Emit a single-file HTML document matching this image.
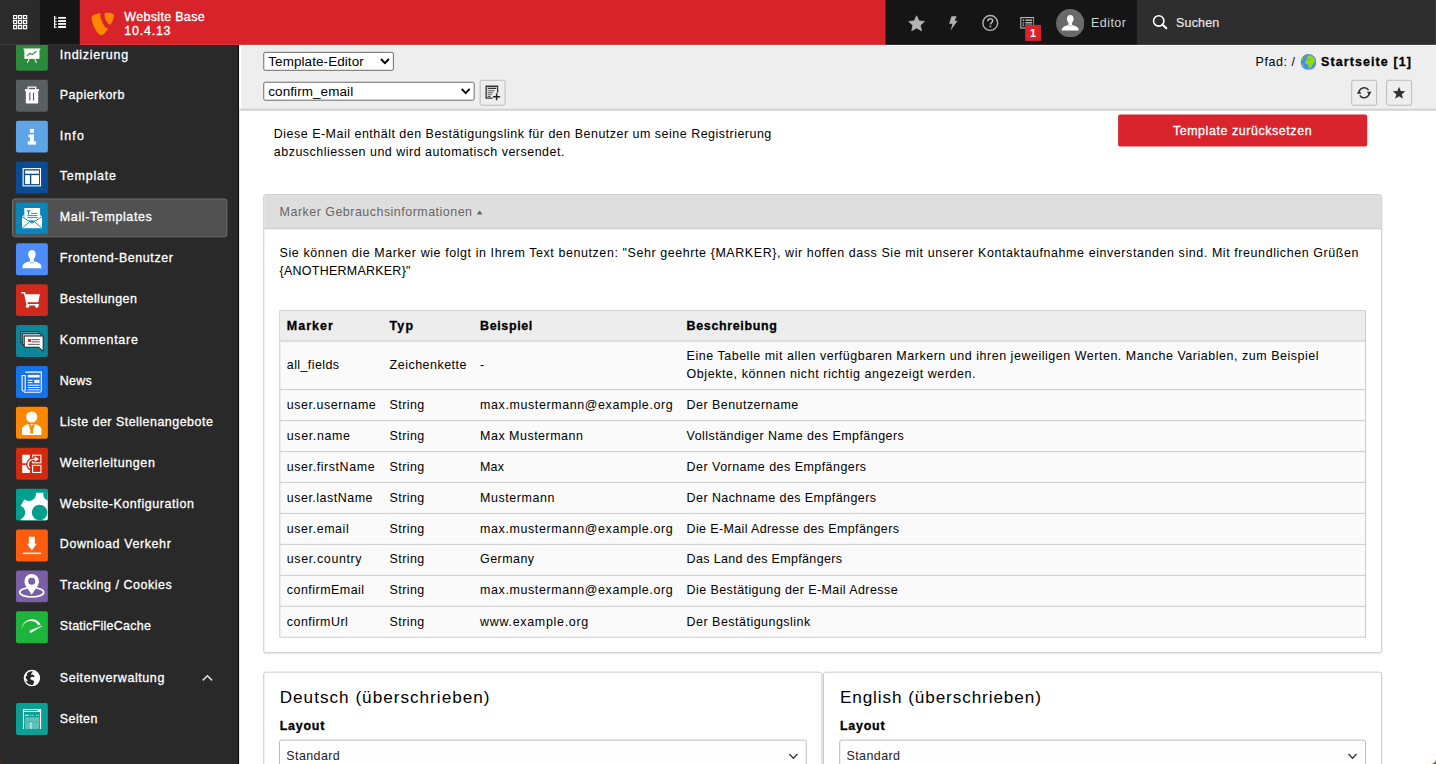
<!DOCTYPE html>
<html lang="de">
<head>
<meta charset="utf-8">
<title>TYPO3 Backend</title>
<style>
*{box-sizing:border-box;margin:0;padding:0}
html,body{width:1436px;height:764px;overflow:hidden;background:#fff}
body{font-family:"Liberation Sans",sans-serif;font-size:12.5px;color:#000;position:relative}
#root{position:absolute;left:0;top:0;width:1440px;height:767px;transform:scale(.9972);transform-origin:0 0;overflow:hidden;background:#fff}
span{white-space:nowrap}
svg{display:block}
/* ---------- top bar ---------- */
#topbar{position:absolute;left:0;top:0;width:1440px;height:45px;z-index:5}
#tbred{position:absolute;left:79px;top:0;width:810px;height:45px;background:#d8232a}
#tb1{position:absolute;left:0;top:0;width:40.6px;height:45px;background:#2b2b2b}
#tb2{position:absolute;left:40px;top:0;width:40px;height:45px;background:#151515}
#tbtools{position:absolute;left:888px;top:0;width:252.6px;height:45px;background:#151515}
#tbsearch{position:absolute;left:1140px;top:0;width:300px;height:45px;background:#2e2e2e}
#sitename{position:absolute;left:124.7px;top:11px;color:#fff;font-size:12.5px;line-height:13.6px;white-space:nowrap;-webkit-text-stroke:.35px #fff}
#tbuser{position:absolute;left:205.5px;top:14.9px;color:#d2d2d2;font-size:12.5px;line-height:16px}
#tbsearchtxt{position:absolute;left:39.5px;top:14.9px;color:#e8e8e8;font-size:12.5px;line-height:16px;-webkit-text-stroke:.2px #e8e8e8}
#topbar svg{position:absolute}
/* ---------- sidebar ---------- */
#sidebar{position:absolute;left:0;top:45px;width:240px;height:722px;background:#292929;overflow:hidden}
.mi{position:absolute;left:12px;width:216px;height:39px}
.mi .ic{position:absolute;left:4px;top:4px;width:32px;height:32px;border-radius:2px;overflow:hidden}
.mi .lb{position:absolute;left:48px;top:11.5px;color:#fff;font-size:12.5px;line-height:16px;white-space:nowrap;-webkit-text-stroke:.3px #fff}
.mi.act{background:#515151;border:1px solid #6e6e6e;border-radius:3px}
.mi.act .ic{left:3px;top:3px}
.mi.act .lb{left:47px;top:10.5px}
/* ---------- docheader ---------- */
#doc{position:absolute;left:240px;top:45px;width:1200px;height:66px;background:#eee;border-bottom:2px solid #d2d2d2;z-index:2}
#doc:before{content:'';position:absolute;left:0;top:0;width:2px;height:100%;background:#fff}
#doc:after{content:'';position:absolute;left:0;top:0;width:100%;height:1px;background:#fbffff}
#sbedge{position:absolute;left:239px;top:45px;width:1px;height:722px;background:#0c0c0c;z-index:3;transform:translateX(-.45px)}
.sel{position:absolute;background:#fff;border:1px solid #6b6b6b;border-radius:2px;height:19px;font-size:13.5px;line-height:17px;padding-left:4px;white-space:nowrap}
.sel svg{position:absolute;right:3px;top:5px}
.dbtn{position:absolute;width:26px;height:26px;background:#eee;border:1px solid #bbb;border-radius:2px}
.dbtn svg{position:absolute;left:4px;top:4px}
#path{position:absolute;top:8px;left:1019px;font-size:12.5px;line-height:16px;white-space:nowrap}
/* ---------- content ---------- */
#content{position:absolute;left:240px;top:110px;width:1200px;height:657px;background:#fff;overflow:hidden}
.t{position:absolute;white-space:nowrap;line-height:18px;font-size:12.5px}
.panel{position:absolute;border:1px solid #ccc;background:#fff;border-radius:2px;box-shadow:0 1px 1px rgba(0,0,0,.1)}
.ph{position:absolute;left:0;top:0;right:0;height:33px;background:#dedede;border-bottom:1px solid #ccc;color:#666}
#tbl{position:absolute;left:15px;top:115px;width:1090px;border:1px solid #ccc;background:#fafafa}
.tr{position:relative;height:31px;border-top:1px solid #ccc}
.tr.h{height:31px;background:#ededed;border-top:0;border-bottom:1px solid #ccc;font-weight:bold}
.tr.h+.tr{border-top:0}
.tr.tall{height:49px}
.tr .c{position:absolute;top:6px;line-height:18px;font-size:12.5px;white-space:nowrap}
.c1{left:7px}.c2{left:110px}.c3{left:201px}.c4{left:408px}
.h2{position:absolute;font-size:19px;line-height:22px;white-space:nowrap}
.lbl{position:absolute;font-weight:bold;font-size:12.5px;line-height:16px}
.fsel{position:absolute;height:32px;border:1px solid #bbb;border-radius:2px;background:#fefefe;padding:8px 0 0 7px;font-size:12.5px;line-height:16px;box-shadow:0 1px 1px rgba(0,0,0,.06)}
.fsel svg{position:absolute;right:9px;top:10px}
b,.b{font-weight:bold;-webkit-text-stroke:.3px currentColor}
</style>
</head>
<body>

<div id="root">
<div id="sidebar">
<div class="mi" style="top:-10.0px"><div class="ic" style="background:#2a8b3c"><svg width="32" height="32" viewBox="0 0 32 32"><rect x="7.6" y="9.6" width="16.8" height="1.6" fill="#fff"/><rect x="8.4" y="10.6" width="15.2" height="9.4" fill="#fff"/>
<path d="M13.2 20 L11.6 23.6 M18.8 20 L20.4 23.6" stroke="#fff" stroke-width="1.1" stroke-linecap="round" opacity=".9"/>
<path d="M11.2 17.2 L14 14.4 L16.2 15.8 L20.6 12.4" stroke="#2a8b3c" stroke-width="1.1" fill="none"/></svg></div><div class="lb"><span style="letter-spacing:0.734px">Indizierung</span></div></div>
<div class="mi" style="top:30.97px"><div class="ic" style="background:#595f61"><svg width="32" height="32" viewBox="0 0 32 32"><path d="M12.3 9.6 V7.4 H19.8 V9.6" fill="none" stroke="#fff" stroke-width="1.3"/><rect x="9" y="9.4" width="14.2" height="2" fill="#fff"/>
<rect x="9.9" y="11.3" width="12.4" height="12.6" rx=".8" fill="#fff"/>
<rect x="13.3" y="12.8" width="1.2" height="8" fill="#595f61"/><rect x="17" y="12.8" width="1.2" height="8" fill="#595f61"/></svg></div><div class="lb"><span style="letter-spacing:0.47px">Papierkorb</span></div></div>
<div class="mi" style="top:71.93px"><div class="ic" style="background:#5ea5e8"><svg width="32" height="32" viewBox="0 0 32 32"><rect x="14" y="8.2" width="4.1" height="3.9" fill="#fff"/><rect x="12.4" y="14" width="5.7" height="2.6" fill="#fff"/>
<rect x="14.2" y="14" width="3.9" height="8" fill="#fff"/><rect x="11.9" y="20.7" width="8.3" height="3.3" fill="#fff"/></svg></div><div class="lb"><span style="letter-spacing:1.069px">Info</span></div></div>
<div class="mi" style="top:112.9px"><div class="ic" style="background:#0a4c94"><svg width="32" height="32" viewBox="0 0 32 32"><rect x="7.2" y="7.1" width="17.4" height="17.3" fill="none" stroke="#fff" stroke-width="1.1"/>
<rect x="9.2" y="9" width="13.9" height="3.2" fill="#fff"/><rect x="9.2" y="13.6" width="4.8" height="9" fill="#fff"/><rect x="15.4" y="13.6" width="7.7" height="9" fill="#fff"/></svg></div><div class="lb"><span style="letter-spacing:0.775px">Template</span></div></div>
<div class="mi act" style="top:153.86px"><div class="ic" style="background:#0a86bb"><svg width="32" height="32" viewBox="0 0 32 32"><path d="M8.4 5.6 H24.2 V18 H8.4 Z" fill="#fff"/>
<path d="M6.1 14 L8.4 12.4 V16 Z M26.1 14 L23.9 12.4 V16Z" fill="#fff"/>
<path d="M6.1 14.2 L16.1 20.6 L26.1 14.2 V25.8 H6.1 Z" fill="#fff"/>
<path d="M6.4 25.6 L13.6 19.4 M25.8 25.6 L18.6 19.4" stroke="#0a86bb" stroke-width=".9" fill="none"/>
<path d="M6.1 14.2 L16.1 20.8 L26.1 14.2" stroke="#0a86bb" stroke-width=".9" fill="none"/>
<path d="M10.6 8.4 H14.6 M12.6 8.4 V12" stroke="#0a86bb" stroke-width="1.1" fill="none"/>
<path d="M15 11 H21.6 M11.4 13.2 H21.6 M11.4 15.2 H21.6" stroke="#0a86bb" stroke-width=".9" fill="none"/></svg></div><div class="lb"><span style="letter-spacing:0.63px">Mail-Templates</span></div></div>
<div class="mi" style="top:194.83px"><div class="ic" style="background:#4c8dfb"><svg width="32" height="32" viewBox="0 0 32 32"><path d="M16 6.8 c-2.4 0 -3.7 1.7 -3.7 4.2 c0 1.6 .5 3 1.4 4 c.3 .4 .4 .9 .4 1.6 v1.2 c-2.4 1 -6 1.6 -7.2 4 c-.3 .6 -.4 1.8 -.4 3.300 h19 c0 -1.500 -.1 -2.700 -.4 -3.300 c-1.200 -2.400 -4.800 -3 -7.200 -4 v-1.200 c0 -.7 .1 -1.200 .4 -1.600 c.9 -1 1.400 -2.400 1.400 -4 c0 -2.500 -1.300 -4.200 -3.700 -4.200z" fill="#fff"/>
<path d="M13.600 18.400 c.700 .900 1.500 1.300 2.400 1.300 s1.700 -.4 2.400 -1.300" stroke="#4c8dfb" stroke-width=".7" fill="none"/></svg></div><div class="lb"><span style="letter-spacing:0.568px">Frontend-Benutzer</span></div></div>
<div class="mi" style="top:235.79px"><div class="ic" style="background:#cf2a1c"><svg width="32" height="32" viewBox="0 0 32 32"><path d="M5.800 8.500 H8.600 L11.300 20.600 H22.600" stroke="#fff" stroke-width="1.500" fill="none" stroke-linecap="round" stroke-linejoin="round"/>
<path d="M9 10 H24 L22.400 18.200 H10.800 Z" fill="#fff"/>
<circle cx="11.600" cy="22" r="1.700" fill="#fff"/><circle cx="20.900" cy="22" r="1.700" fill="#fff"/></svg></div><div class="lb"><span style="letter-spacing:0.449px">Bestellungen</span></div></div>
<div class="mi" style="top:276.75px"><div class="ic" style="background:#0e8598"><svg width="32" height="32" viewBox="0 0 32 32"><rect x="4.900" y="6.600" width="18.200" height="11" fill="#5c9fad" stroke="#1a2c30" stroke-width=".8"/>
<rect x="6.600" y="8.600" width="18.400" height="11" fill="#9ccbd3" stroke="#1a2c30" stroke-width=".8"/>
<path d="M8.300 11 H27.300 V26.200 L23 22.200 H8.300 Z" fill="#fff" stroke="#111" stroke-width=".9"/>
<rect x="12.100" y="14" width="3" height="2.900" fill="#e02a2a"/>
<path d="M15.800 14.600 H23.900 M15.800 16.800 H23.900 M12 19.300 H23.900" stroke="#555" stroke-width="1"/></svg></div><div class="lb"><span style="letter-spacing:0.74px">Kommentare</span></div></div>
<div class="mi" style="top:317.72px"><div class="ic" style="background:#1572ee"><svg width="32" height="32" viewBox="0 0 32 32"><path d="M9.300 6.200 H25.400 V24.500 a1.900 1.900 0 0 1 -1.900 1.900 H8.200" fill="none" stroke="#fff" stroke-width="1.100"/>
<path d="M9.300 9.600 H6.200 V24.400 a1.800 1.800 0 0 0 3.100 0 Z" fill="none" stroke="#fff" stroke-width="1.100"/>
<rect x="11.900" y="8.900" width="11.800" height="2.600" fill="#fff"/>
<path d="M11.900 14.400 H16.600 M11.900 16.700 H16.600 M11.900 19.300 H23.700 M11.900 21.600 H23.700 M11.900 23.900 H23.700" stroke="#fff" stroke-width="1"/>
<rect x="18.300" y="13.900" width="5.400" height="3.300" fill="#fff" opacity=".9"/></svg></div><div class="lb"><span style="letter-spacing:0.275px">News</span></div></div>
<div class="mi" style="top:358.69px"><div class="ic" style="background:#ff8700"><svg width="32" height="32" viewBox="0 0 32 32"><circle cx="15.800" cy="10.200" r="5.600" fill="#fff"/>
<path d="M6 27.400 v-4.400 c0 -3.200 2.600 -4.800 6 -5.600 h7.600 c3.400 .800 6 2.400 6 5.600 v4.400 a.8 .8 0 0 1 -.8 .8 h-18 a.8 .8 0 0 1 -.8 -.8z" fill="#fff"/>
<path d="M12.600 17.400 l2 6.600 l1.200 -3.600 l1.200 3.600 l2 -6.600 l-1.800 0 l-1.400 2 l-1.400 -2z" fill="#ff8700"/>
<path d="M15 20.400 h1.600 l.7 6.400 h-3z" fill="#ff8700"/></svg></div><div class="lb"><span style="letter-spacing:0.485px">Liste der Stellenangebote</span></div></div>
<div class="mi" style="top:399.65px"><div class="ic" style="background:#d32a0e"><svg width="32" height="32" viewBox="0 0 32 32"><rect x="6.300" y="7" width="7.700" height="8.600" fill="#fff"/><rect x="6.300" y="17.200" width="7.700" height="8.100" fill="#fff"/>
<rect x="16.700" y="7.500" width="8.300" height="7.600" fill="none" stroke="#fff" stroke-width="1.100"/>
<rect x="16.700" y="17.700" width="8.300" height="7.100" fill="none" stroke="#fff" stroke-width="1.100"/>
<path d="M14.600 21 c-3.600 -2.600 -4 -9.600 4.800 -9.600" fill="none" stroke="#d32a0e" stroke-width="3.600"/>
<path d="M14.200 20.400 c-3 -2.400 -3.200 -8.800 5.400 -9" fill="none" stroke="#fff" stroke-width="1.300"/>
<path d="M18.800 8.600 L23.200 11.300 L18.800 14 Z" fill="#fff"/></svg></div><div class="lb"><span style="letter-spacing:0.616px">Weiterleitungen</span></div></div>
<div class="mi" style="top:440.62px"><div class="ic" style="background:#00a08f"><svg width="32" height="32" viewBox="0 0 32 32"><polygon points="0.84,24.00 12.27,4.20 35.13,4.20 46.56,24.00 35.13,43.80 12.27,43.80" fill="#fff"/><circle cx="2.20" cy="24.00" r="7.150" fill="#00a08f"/><circle cx="12.95" cy="5.38" r="7.150" fill="#00a08f"/><circle cx="34.45" cy="5.38" r="7.150" fill="#00a08f"/><circle cx="12.95" cy="42.62" r="7.150" fill="#00a08f"/><circle cx="45.20" cy="24.00" r="7.150" fill="#00a08f"/><circle cx="34.45" cy="42.62" r="7.150" fill="#00a08f"/><circle cx="23.7" cy="24" r="7.800" fill="#00a08f"/></svg></div><div class="lb"><span style="letter-spacing:0.581px">Website-Konfiguration</span></div></div>
<div class="mi" style="top:481.58px"><div class="ic" style="background:#ff5c0d"><svg width="32" height="32" viewBox="0 0 32 32"><path d="M12.900 7.200 H18.900 V14.200 H20.900 L15.900 20.900 L10.900 14.200 H12.900 Z" fill="#fff"/><rect x="7" y="23.100" width="18" height="1.600" fill="#fff" opacity=".92"/></svg></div><div class="lb"><span style="letter-spacing:0.61px">Download Verkehr</span></div></div>
<div class="mi" style="top:522.55px"><div class="ic" style="background:#7a5ea7"><svg width="32" height="32" viewBox="0 0 32 32"><ellipse cx="15.800" cy="22" rx="12.100" ry="4.700" fill="none" stroke="#fff" stroke-width="1.700"/>
<path d="M15.800 3.500 a7.300 7.300 0 0 1 7.300 7.300 c0 4.200 -4.200 8.400 -7.300 13.600 c-3.100 -5.200 -7.300 -9.400 -7.300 -13.600 a7.300 7.300 0 0 1 7.300 -7.300z" fill="#fff"/>
<circle cx="15.800" cy="10.800" r="3.500" fill="#7a5ea7"/></svg></div><div class="lb"><span style="letter-spacing:0.545px">Tracking / Cookies</span></div></div>
<div class="mi" style="top:563.51px"><div class="ic" style="background:#1eb53c"><svg width="32" height="32" viewBox="0 0 32 32"><defs><linearGradient id="gg" x1="0" y1="1" x2="1" y2="0"><stop offset="0" stop-color="#fff" stop-opacity=".15"/><stop offset=".45" stop-color="#fff" stop-opacity="1"/></linearGradient></defs>
<path d="M5.400 19.200 C5.400 7.600 19.600 4.200 24.800 13.200 L22.500 14.300 C18.600 7 6.200 8.600 6 19.200 Z" fill="url(#gg)"/>
<path d="M14.300 21.200 a1.300 1.300 0 0 1 .2 -2.300 L25.900 14.600 L26.100 15.100 L15.600 21.300 a1.300 1.300 0 0 1 -1.300 -.1z" fill="#fff"/></svg></div><div class="lb"><span style="letter-spacing:0.265px">StaticFileCache</span></div></div>
<div class="mi" style="top:615px"><div class="ic" style="background:none"><svg width="32" height="32" viewBox="0 0 32 32"><circle cx="16" cy="16" r="7.600" fill="#292929" stroke="#fff" stroke-width="1.300"/>
<path d="M17.200 8.600 c3.800 .6 6.400 3.600 6.400 7.400 c0 3.600 -2.400 6.600 -5.800 7.400 c-.6 -1 -.4 -2.200 .2 -3 c.6 -.8 .2 -1.600 -.6 -2 c-1 -.4 -2.200 -.4 -2.800 -1.400 c-.6 -1 .2 -2 1.200 -2.200 c1 -.2 1.600 .6 2.400 .2 c.8 -.4 .2 -1.400 -.4 -1.800 c-.8 -.4 -1.800 0 -2.400 -.8 c-.6 -.8 .4 -1.400 1 -2 c.4 -.6 .4 -1.200 .8 -1.800z" fill="#fff"/>
<path d="M10.200 11.200 c.8 .2 1.200 .8 1 1.600 c-.2 .8 -1 1 -1.400 1.800 c-.4 .8 .2 1.600 .8 2.200 c.6 .6 1.200 1.200 1 2 c-.2 .6 -.8 .8 -1.400 .6 c-1 -1.400 -1.600 -3 -1.600 -4.400 c0 -1.400 .6 -2.800 1.600 -3.800z" fill="#fff"/></svg></div><div class="lb"><span style="letter-spacing:0.592px">Seitenverwaltung</span></div><svg style="position:absolute;left:190px;top:15.500px" width="12" height="8" viewBox="0 0 12 8"><path d="M1.300 6.300 L6 1.700 L10.700 6.300" fill="none" stroke="#dcdcdc" stroke-width="1.600"/></svg></div>
<div class="mi" style="top:656px"><div class="ic" style="background:#0aa095"><svg width="32" height="32" viewBox="0 0 32 32"><rect x="7" y="6" width="18.200" height="2.800" fill="#fff"/><rect x="8.400" y="6.900" width="13.600" height="1" fill="#0aa095"/>
<rect x="7" y="8.800" width="1.100" height="17.200" fill="#fff"/><rect x="24.100" y="8.800" width="1.100" height="17.200" fill="#fff"/>
<rect x="9.200" y="11.800" width="3.400" height="1" fill="#fff"/><rect x="14" y="11.800" width="1.200" height="1" fill="#fff" opacity=".8"/><rect x="16.200" y="11.800" width="1.200" height="1" fill="#fff" opacity=".8"/><rect x="20" y="11.800" width="1.200" height="1" fill="#fff" opacity=".8"/><rect x="22" y="11.800" width="1.200" height="1" fill="#fff" opacity=".8"/>
<rect x="9.200" y="14.300" width="14" height="3.800" fill="#fff" opacity=".35"/>
<rect x="9.200" y="19.300" width="5.200" height="6.700" fill="#fff" opacity=".35"/><rect x="15.600" y="19.300" width="7.600" height="6.700" fill="#fff" opacity=".35"/>
<rect x="14.400" y="19.300" width="1.200" height="6.700" fill="#fff"/><rect x="8.100" y="18.100" width="16" height="1.200" fill="#fff" opacity=".25"/></svg></div><div class="lb"><span style="letter-spacing:0.43px">Seiten</span></div></div>
</div>
<div id="sbedge"></div>
<div id="doc">
<div class="sel" style="left:24px;top:7px;width:131px"><span style="letter-spacing:0.087px">Template-Editor</span><svg width="10" height="7" viewBox="0 0 10 7"><path d="M1 1.200 L5 5.300 L9 1.200" fill="none" stroke="#000" stroke-width="1.900"/></svg></div>
<div class="sel" style="left:24px;top:37px;width:212px"><span style="letter-spacing:0.092px">confirm_email</span><svg width="10" height="7" viewBox="0 0 10 7"><path d="M1 1.200 L5 5.300 L9 1.200" fill="none" stroke="#000" stroke-width="1.900"/></svg></div>
<div class="dbtn" style="left:241.35px;top:34.92px"><svg width="16" height="16" viewBox="0 0 16 16"><path d="M13 8 V1.500 H1.500 V13.500 H8" fill="none" stroke="#333" stroke-width="1.300"/><path d="M3 3.700 H11.600" stroke="#333" stroke-width="1.300"/><path d="M3 6 H10 M3 8 H8.500 M3 10 H7 M3 11.800 H6" stroke="#555" stroke-width="1"/><path d="M12 8.400 V15.600 M8.400 12 H15.600" stroke="#222" stroke-width="1.500"/></svg></div>
<div class="t" style="left:1019.03px;top:7.75px"><span style="letter-spacing:0.578px">Pfad: /</span></div>
<svg style="position:absolute;left:1063.85px;top:9.0px" width="16.400" height="16.400" viewBox="0 0 16 16"><circle cx="8" cy="8" r="7.800" fill="#4a8df5"/>
<path d="M6.900 2.500 C7.500 1.800 8.400 1.500 9.100 1.600 C10.200 1.600 11.200 2 11.800 2.500 C12.800 3.200 13.600 4.200 14 5.300 C14.400 6.200 14.700 7.100 14.600 7.800 C14.100 8.300 13.600 8.300 13.100 8.400 C12.600 9.200 12.300 10.100 11.800 10.900 C11.200 12.200 10.400 13.600 9.400 14.400 C8.600 14.200 8 13.400 7.800 12.500 C7.600 11.700 7.900 11 7.800 10.300 C6.900 9.900 5.900 9.900 5.100 9.400 C4.600 9 4.400 8.600 4.600 8.100 C4.700 7.600 5 7.200 5.400 6.900 C5.800 6.500 6.400 6.400 6.900 6.250 C6.600 6.100 6.300 5.900 6.300 5.600 C6.200 5.300 6.200 5.200 6.300 5 C6.200 4 6.400 3.200 6.900 2.500 Z" fill="#90dc05"/>
<path d="M6.700 5.600 C7.600 5.150 9.300 5.150 10.100 5.500 C9.600 6.150 7.500 6.250 6.700 5.600Z" fill="#4a8df5"/>
<path d="M1.400 4.300 C2 3.900 2.800 4 2.900 4.600 C2.600 5.400 2.200 6.200 1.700 6.900 C1.200 6.900 .9 6.300 1 5.600 C1.100 5.100 1.200 4.700 1.400 4.300Z M1.400 9.400 C2 9.600 2.400 10.400 3 10.900 C3.600 11.300 3.900 11.800 3.700 12.400 C3.200 12.700 2.600 12.400 2.200 11.900 C1.700 11.200 1.400 10.300 1.400 9.400Z" fill="#90dc05" opacity=".85"/>
<ellipse cx="4.200" cy="2.500" rx=".8" ry=".45" fill="#90dc05" opacity=".8"/></svg>
<div class="t b" style="left:1084.71px;top:7.75px"><span style="letter-spacing:1.109px">Startseite [1]</span></div>
<div class="dbtn" style="left:1114.99px;top:35.12px"><svg width="16" height="16" viewBox="0 0 16 16"><path d="M3 8.600 A5.100 5.100 0 0 1 12.400 5.400" fill="none" stroke="#333" stroke-width="1.500"/><path d="M13 7.400 A5.100 5.100 0 0 1 3.600 10.600" fill="none" stroke="#333" stroke-width="1.500"/><path d="M.6 9 L5.200 9 L2.900 5.600 Z" fill="#333"/><path d="M15.400 7 L10.800 7 L13.100 10.400 Z" fill="#333"/></svg></div>
<div class="dbtn" style="left:1149.89px;top:35.12px"><svg width="16" height="16" viewBox="0 0 16 16"><polygon points="8.00,2.00 9.70,6.35 14.37,6.63 10.76,9.60 11.94,14.12 8.00,11.60 4.06,14.12 5.24,9.60 1.63,6.63 6.30,6.35" fill="#333"/></svg></div>
</div>
<div id="content">
<svg style="position:absolute;left:0;top:0" width="1200" height="657" viewBox="0 0 1200 657"><rect x="881.24" y="4.82" width="249.80" height="32.19" rx="2" fill="#d9232d"/><rect x="24.49" y="86.25" width="1121.09" height="459.39" rx="2" fill="none" stroke="#000" stroke-opacity=".07" stroke-width="1.2"/><rect x="24.49" y="85.15" width="1121.09" height="459.39" rx="2" fill="#fff" stroke="#ccc"/><rect x="24.99" y="85.65" width="1120.09" height="34.20" rx="0" fill="#dedede"/><rect x="24.99" y="118.84" width="1120.09" height="1" fill="#ccc"/><rect x="40.58" y="201.47" width="1088.75" height="327.52" rx="0" fill="#fafafa" stroke="#ccc"/><rect x="41.09" y="201.97" width="1087.75" height="29.38" rx="0" fill="#ededed"/><rect x="41.09" y="231.26" width="1087.75" height="1.40" rx="0" fill="#d2d2d2"/><rect x="41.09" y="280.11" width="1087.75" height="1.10" rx="0" fill="#cfcfcf"/><rect x="41.09" y="311.17" width="1087.75" height="1.10" rx="0" fill="#cfcfcf"/><rect x="41.09" y="342.23" width="1087.75" height="1.10" rx="0" fill="#cfcfcf"/><rect x="41.09" y="373.28" width="1087.75" height="1.10" rx="0" fill="#cfcfcf"/><rect x="41.09" y="404.34" width="1087.75" height="1.10" rx="0" fill="#cfcfcf"/><rect x="41.09" y="435.40" width="1087.75" height="1.10" rx="0" fill="#cfcfcf"/><rect x="41.09" y="466.45" width="1087.75" height="1.10" rx="0" fill="#cfcfcf"/><rect x="41.09" y="497.51" width="1087.75" height="1.10" rx="0" fill="#cfcfcf"/><rect x="24.49" y="565.19" width="559.72" height="117.63" rx="2" fill="none" stroke="#000" stroke-opacity=".07" stroke-width="1.2"/><rect x="24.49" y="564.09" width="559.72" height="117.63" rx="2" fill="#fff" stroke="#ccc"/><rect x="585.81" y="565.19" width="559.77" height="117.63" rx="2" fill="none" stroke="#000" stroke-opacity=".07" stroke-width="1.2"/><rect x="585.81" y="564.09" width="559.77" height="117.63" rx="2" fill="#fff" stroke="#ccc"/><rect x="40.28" y="632.18" width="528.28" height="49.54" rx="2" fill="#fefefe" stroke="#bbb"/><path d="M551.57 646.18 l4 4.2 l4 -4.2" fill="none" stroke="#333" stroke-width="1.3"/><rect x="602.06" y="632.18" width="527.28" height="49.54" rx="2" fill="#fefefe" stroke="#bbb"/><path d="M1112.34 646.18 l4 4.2 l4 -4.2" fill="none" stroke="#333" stroke-width="1.3"/></svg>
<div class="t" style="left:34.57px;top:14.66px;"><span style="letter-spacing:0.504px">Diese E-Mail enthält den Bestätigungslink für den Benutzer um seine Registrierung</span></div>
<div class="t" style="left:34.57px;top:32.61px;"><span style="letter-spacing:0.5px">abzuschliessen und wird automatisch versendet.</span></div>
<div class="t" style="left:936.19px;top:11.55px;color:#fff;-webkit-text-stroke:.3px #fff"><span style="letter-spacing:0.562px">Template zurücksetzen</span></div>
<div class="t" style="left:40.39px;top:93.88px;color:#666"><span style="letter-spacing:0.489px">Marker Gebrauchsinformationen</span></div>
<div style="position:absolute;left:237.64px;top:101.19px;width:0;height:0;border-left:3.900px solid transparent;border-right:3.900px solid transparent;border-bottom:4.400px solid #666"></div>
<div class="t" style="left:40.39px;top:135.09px;"><span style="letter-spacing:0.586px">Sie können die Marker wie folgt in Ihrem Text benutzen: "Sehr geehrte {MARKER}, wir hoffen dass Sie mit unserer Kontaktaufnahme einverstanden sind. Mit freundlichen Grüßen</span></div>
<div class="t" style="left:40.39px;top:152.99px;"><span style="letter-spacing:0.258px">{ANOTHERMARKER}"</span></div>
<div class="t b" style="left:47.61px;top:207.85px;"><span style="letter-spacing:1.026px">Marker</span></div>
<div class="t b" style="left:150.69px;top:207.85px;"><span style="letter-spacing:1.084px">Typ</span></div>
<div class="t b" style="left:241.45px;top:207.85px;"><span style="letter-spacing:0.63px">Beispiel</span></div>
<div class="t b" style="left:448.53px;top:207.85px;"><span style="letter-spacing:0.654px">Beschreibung</span></div>
<div class="t" style="left:47.61px;top:247.36px;"><span style="letter-spacing:0.412px">all_fields</span></div>
<div class="t" style="left:150.69px;top:247.36px;"><span style="letter-spacing:0.503px">Zeichenkette</span></div>
<div class="t" style="left:241.45px;top:247.36px;">-</div>
<div class="t" style="left:448.53px;top:238.38px;"><span style="letter-spacing:0.537px">Eine Tabelle mit allen verfügbaren Markern und ihren jeweiligen Werten. Manche Variablen, zum Beispiel</span></div>
<div class="t" style="left:448.53px;top:256.33px;"><span style="letter-spacing:0.575px">Objekte, können nicht richtig angezeigt werden.</span></div>
<div class="t" style="left:47.61px;top:287.14px;"><span style="letter-spacing:0.547px">user.username</span></div>
<div class="t" style="left:150.69px;top:287.14px;"><span style="letter-spacing:0.428px">String</span></div>
<div class="t" style="left:241.45px;top:287.14px;"><span style="letter-spacing:0.604px">max.mustermann@example.org</span></div>
<div class="t" style="left:448.53px;top:287.14px;"><span style="letter-spacing:0.466px">Der Benutzername</span></div>
<div class="t" style="left:47.61px;top:318.20px;"><span style="letter-spacing:0.613px">user.name</span></div>
<div class="t" style="left:150.69px;top:318.20px;"><span style="letter-spacing:0.428px">String</span></div>
<div class="t" style="left:241.45px;top:318.20px;"><span style="letter-spacing:0.502px">Max Mustermann</span></div>
<div class="t" style="left:448.53px;top:318.20px;"><span style="letter-spacing:0.466px">Vollständiger Name des Empfängers</span></div>
<div class="t" style="left:47.61px;top:349.25px;"><span style="letter-spacing:0.573px">user.firstName</span></div>
<div class="t" style="left:150.69px;top:349.25px;"><span style="letter-spacing:0.428px">String</span></div>
<div class="t" style="left:241.45px;top:349.25px;"><span style="letter-spacing:0.121px">Max</span></div>
<div class="t" style="left:448.53px;top:349.25px;"><span style="letter-spacing:0.475px">Der Vorname des Empfängers</span></div>
<div class="t" style="left:47.61px;top:380.31px;"><span style="letter-spacing:0.503px">user.lastName</span></div>
<div class="t" style="left:150.69px;top:380.31px;"><span style="letter-spacing:0.428px">String</span></div>
<div class="t" style="left:241.45px;top:380.31px;"><span style="letter-spacing:0.569px">Mustermann</span></div>
<div class="t" style="left:448.53px;top:380.31px;"><span style="letter-spacing:0.437px">Der Nachname des Empfängers</span></div>
<div class="t" style="left:47.61px;top:411.37px;"><span style="letter-spacing:0.565px">user.email</span></div>
<div class="t" style="left:150.69px;top:411.37px;"><span style="letter-spacing:0.428px">String</span></div>
<div class="t" style="left:241.45px;top:411.37px;"><span style="letter-spacing:0.604px">max.mustermann@example.org</span></div>
<div class="t" style="left:448.53px;top:411.37px;"><span style="letter-spacing:0.379px">Die E-Mail Adresse des Empfängers</span></div>
<div class="t" style="left:47.61px;top:442.42px;"><span style="letter-spacing:0.629px">user.country</span></div>
<div class="t" style="left:150.69px;top:442.42px;"><span style="letter-spacing:0.428px">String</span></div>
<div class="t" style="left:241.45px;top:442.42px;"><span style="letter-spacing:0.441px">Germany</span></div>
<div class="t" style="left:448.53px;top:442.42px;"><span style="letter-spacing:0.355px">Das Land des Empfängers</span></div>
<div class="t" style="left:47.61px;top:473.48px;"><span style="letter-spacing:0.479px">confirmEmail</span></div>
<div class="t" style="left:150.69px;top:473.48px;"><span style="letter-spacing:0.428px">String</span></div>
<div class="t" style="left:241.45px;top:473.48px;"><span style="letter-spacing:0.604px">max.mustermann@example.org</span></div>
<div class="t" style="left:448.53px;top:473.48px;"><span style="letter-spacing:0.432px">Die Bestätigung der E-Mail Adresse</span></div>
<div class="t" style="left:47.61px;top:504.54px;"><span style="letter-spacing:0.469px">confirmUrl</span></div>
<div class="t" style="left:150.69px;top:504.54px;"><span style="letter-spacing:0.428px">String</span></div>
<div class="t" style="left:241.45px;top:504.54px;"><span style="letter-spacing:0.703px">www.example.org</span></div>
<div class="t" style="left:448.53px;top:504.54px;"><span style="letter-spacing:0.494px">Der Bestätigungslink</span></div>
<div class="t" style="left:40.49px;top:578.01px;font-size:17.2px;line-height:22px;"><span style="letter-spacing:1.008px">Deutsch (überschrieben)</span></div>
<div class="t b" style="left:40.49px;top:608.62px;"><span style="letter-spacing:0.768px">Layout</span></div>
<div class="t" style="left:47.10px;top:638.90px;color:#222"><span style="letter-spacing:0.417px">Standard</span></div>
<div class="t" style="left:602.26px;top:578.01px;font-size:17.2px;line-height:22px;"><span style="letter-spacing:0.911px">English (überschrieben)</span></div>
<div class="t b" style="left:602.26px;top:608.62px;"><span style="letter-spacing:0.768px">Layout</span></div>
<div class="t" style="left:608.88px;top:638.90px;color:#222"><span style="letter-spacing:0.417px">Standard</span></div>
</div>
<div id="topbar">
<div id="tbred"></div><div id="tb1"></div><div id="tb2"></div>
<svg style="left:12.89px;top:14.84px" width="15" height="15" viewBox="0 0 15 15"><rect x="0.60" y="0.60" width="3.1" height="3.1" fill="none" stroke="#fff" stroke-width="1.2"/><rect x="5.62" y="0.60" width="3.1" height="3.1" fill="none" stroke="#fff" stroke-width="1.2"/><rect x="10.64" y="0.60" width="3.1" height="3.1" fill="none" stroke="#fff" stroke-width="1.2"/><rect x="0.60" y="5.62" width="3.1" height="3.1" fill="none" stroke="#fff" stroke-width="1.2"/><rect x="5.62" y="5.62" width="3.1" height="3.1" fill="none" stroke="#fff" stroke-width="1.2"/><rect x="10.64" y="5.62" width="3.1" height="3.1" fill="none" stroke="#fff" stroke-width="1.2"/><rect x="0.60" y="10.64" width="3.1" height="3.1" fill="none" stroke="#fff" stroke-width="1.2"/><rect x="5.62" y="10.64" width="3.1" height="3.1" fill="none" stroke="#fff" stroke-width="1.2"/><rect x="10.64" y="10.64" width="3.1" height="3.1" fill="none" stroke="#fff" stroke-width="1.2"/></svg>
<svg style="left:54.05px;top:16.04px" width="13" height="13" viewBox="0 0 13 13"><rect x="0" y="0" width="1.4" height="12.2" fill="#fff"/><rect x="4.3" y="1.0" width="7.9" height="1.8" fill="#fff"/><rect x="1.4" y="1.7" width="1.4" height="1.2" fill="#fff"/><rect x="4.3" y="4.2" width="7.9" height="1.8" fill="#fff"/><rect x="1.4" y="4.9" width="1.4" height="1.2" fill="#fff"/><rect x="4.3" y="7.1" width="7.9" height="1.8" fill="#fff"/><rect x="1.4" y="7.8" width="1.4" height="1.2" fill="#fff"/><rect x="4.3" y="10.1" width="7.9" height="2.0" fill="#fff"/><rect x="1.4" y="10.799999999999999" width="1.4" height="1.2" fill="#fff"/></svg>
<svg style="left:0;top:0" width="130" height="45" viewBox="0 0 130 45"><g transform="translate(88.48 9.64) scale(1.805)"><path fill="#ff8700" d="M11.100 10.300c-.2 0-.3.100-.5.100-1.600 0-3.900-5.500-3.900-7.400 0-.7.200-.9.400-1.100-1.900.2-4.200.9-4.900 1.800-.2.200-.3.600-.3 1 0 2.900 3.100 9.500 5.300 9.500 1 0 2.700-1.700 3.900-3.900M10.200 1.800c2 0 4 .3 4 1.500 0 2.300-1.500 5.100-2.200 5.100-1.300 0-3-3.700-3-5.500 0-.8.300-1.100 1.200-1.100"/></g></svg>
<div id="sitename"><span style="letter-spacing:0.329px">Website Base</span><br><span style="letter-spacing:0.768px">10.4.13</span></div>
<div id="tbtools">
<svg style="left:21.95px;top:13.64px" width="19" height="19" viewBox="0 0 19 19"><polygon points="9.20,1.80 11.49,6.94 17.09,7.54 12.91,11.31 14.08,16.81 9.20,14.00 4.32,16.81 5.49,11.31 1.31,7.54 6.91,6.94" fill="#b4b4b4" stroke="#b4b4b4" stroke-width=".8" stroke-linejoin="round"/></svg>
<svg style="left:63.06px;top:15.84px" width="10" height="15" viewBox="0 0 10 15"><path d="M3.200 .3 L8.300 .3 L6.300 4.900 L9.300 4.900 L2.300 14.600 L4.200 7.700 L.8 7.700 Z" fill="#b4b4b4"/></svg>
<svg style="left:95.85px;top:13.94px" width="18.050" height="18.050" viewBox="0 0 18 18"><circle cx="9" cy="9" r="7.400" fill="none" stroke="#b4b4b4" stroke-width="1.400"/><path d="M6.600 7.200 c0 -1.500 1.100 -2.400 2.500 -2.400 c1.400 0 2.400 .9 2.400 2.100 c0 1.800 -2.300 1.800 -2.300 3.700" fill="none" stroke="#b4b4b4" stroke-width="1.600"/><rect x="8.300" y="11.700" width="1.700" height="1.700" fill="#b4b4b4"/></svg>
<svg style="left:134.76px;top:17.15px" width="14.400" height="11.700" viewBox="0 0 14.400 11.700"><rect x=".6" y=".6" width="13.200" height="10.500" fill="none" stroke="#b4b4b4" stroke-width="1.200"/><path d="M2.400 3.300 H4 M2.400 5.900 H4 M2.400 8.400 H4" stroke="#b4b4b4" stroke-width="1.400"/><path d="M5.200 3.300 H12 M5.200 5.900 H12 M5.200 8.400 H12" stroke="#b4b4b4" stroke-width="1.500"/></svg>
<div style="position:absolute;left:139.88px;top:24.97px;width:16.100px;height:16px;background:#d9232c;color:#fff;font-weight:bold;font-size:11px;line-height:16px;text-align:center">1</div>
<svg style="left:170.86px;top:8.82px" width="28.500" height="28.500" viewBox="0 0 28.400 28.400"><circle cx="14.200" cy="14.200" r="14.200" fill="#6a6a6a"/><path d="M14.200 6.100 c-2.100 0 -3.300 1.500 -3.300 3.700 c0 1.400 .5 2.700 1.200 3.500 c.3 .4 .4 .8 .4 1.400 v1 c-2.100 .9 -5.200 1.400 -6.300 3.500 c-.3 .6 -.4 1.400 -.4 2.300 h16.800 c0 -.9 -.1 -1.700 -.4 -2.300 c-1.100 -2.100 -4.200 -2.600 -6.300 -3.500 v-1 c0 -.6 .1 -1 .4 -1.400 c.7 -.8 1.200 -2.100 1.200 -3.500 c0 -2.200 -1.200 -3.700 -3.300 -3.700z" fill="#fff"/><path d="M12.200 16.100 c.6 .7 1.300 1 2 1 s1.400 -.3 2 -1" stroke="#8a8a8a" stroke-width=".6" fill="none"/></svg>
<div id="tbuser" style="left:206.06px"><span style="letter-spacing:0.468px">Editor</span></div>
</div>
<div id="tbsearch">
<svg style="left:14.73px;top:14.24px" width="17" height="17" viewBox="0 0 17 17"><circle cx="7" cy="7" r="5.200" fill="none" stroke="#fff" stroke-width="1.600"/><path d="M10.900 10.900 L14.600 14.400" stroke="#fff" stroke-width="2" stroke-linecap="round"/></svg>
<div id="tbsearchtxt" style="left:39.3px"><span style="letter-spacing:0.203px">Suchen</span></div>
</div>
</div>
</div>
<div style="position:absolute;right:0;bottom:0;width:5px;height:5px;background:radial-gradient(circle at 0 0,rgba(138,90,0,0) 4.400px,#8a5a00 5.400px)"></div>
<div style="position:absolute;left:0;bottom:0;width:4px;height:4px;background:radial-gradient(circle at 100% 0,rgba(74,42,28,0) 3.200px,#4a2a1c 4.400px)"></div>
</body>
</html>
